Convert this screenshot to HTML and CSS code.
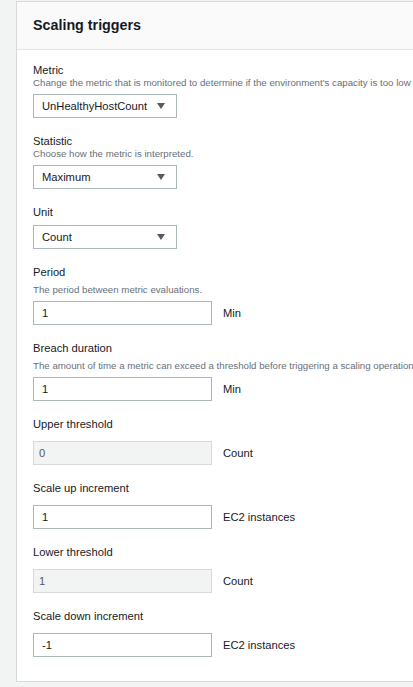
FILE: index.html
```html
<!DOCTYPE html>
<html lang="en">
<head>
<meta charset="utf-8">
<title>Scaling triggers</title>
<link rel="stylesheet" href="styles.css">
</head>
<body>
<div class="page">
  <section class="panel">
    <header class="panel-header"><h2 class="panel-title">Scaling triggers</h2></header>
    <div class="panel-body">
      <div class="field field--select">
        <div class="label">Metric</div>
        <div class="desc">Change the metric that is monitored to determine if the environment's capacity is too low or too high.</div>
        <div class="select"><span>UnHealthyHostCount</span><svg class="caret" width="8" height="6" viewBox="0 0 8 6"><path d="M0 0H8L4 6Z" fill="#545b64"/></svg></div>
      </div>
      <div class="field field--select">
        <div class="label">Statistic</div>
        <div class="desc">Choose how the metric is interpreted.</div>
        <div class="select"><span>Maximum</span><svg class="caret" width="8" height="6" viewBox="0 0 8 6"><path d="M0 0H8L4 6Z" fill="#545b64"/></svg></div>
      </div>
      <div class="field field--select">
        <div class="label">Unit</div>
        <div class="select"><span>Count</span><svg class="caret" width="8" height="6" viewBox="0 0 8 6"><path d="M0 0H8L4 6Z" fill="#545b64"/></svg></div>
      </div>
      <div class="field">
        <div class="label">Period</div>
        <div class="desc">The period between metric evaluations.</div>
        <div class="row"><input class="input" type="text" value="1"><span class="unit">Min</span></div>
      </div>
      <div class="field">
        <div class="label">Breach duration</div>
        <div class="desc">The amount of time a metric can exceed a threshold before triggering a scaling operation.</div>
        <div class="row"><input class="input" type="text" value="1"><span class="unit">Min</span></div>
      </div>
      <div class="field">
        <div class="label">Upper threshold</div>
        <div class="row"><input class="input input--disabled" type="text" value="0" disabled><span class="unit">Count</span></div>
      </div>
      <div class="field">
        <div class="label">Scale up increment</div>
        <div class="row"><input class="input" type="text" value="1"><span class="unit">EC2 instances</span></div>
      </div>
      <div class="field">
        <div class="label">Lower threshold</div>
        <div class="row"><input class="input input--disabled" type="text" value="1" disabled><span class="unit">Count</span></div>
      </div>
      <div class="field">
        <div class="label">Scale down increment</div>
        <div class="row"><input class="input" type="text" value="-1"><span class="unit">EC2 instances</span></div>
      </div>
    </div>
  </section>
</div>
</body>
</html>
```

FILE: styles.css
```css
html, body {
  margin: 0;
  padding: 0;
  overflow: hidden;
  background: #f2f3f3;
}

body {
  font-family: "Liberation Sans", Arial, sans-serif;
  color: #16191f;
  width: 413px;
  height: 687px;
}

.page {
  padding: 1px 0 0 16px;
}

.panel {
  width: 430px;
  background: #ffffff;
  border: 1px solid #d5dbdb;
  border-right: none;
}

.panel-header {
  background: #fafafa;
  border-bottom: 1px solid #e3e6e6;
  padding: 15px 16px;
}

.panel-title {
  margin: 0;
  font-size: 14.3px;
  line-height: 17px;
  font-weight: 700;
  color: #16191f;
}

.panel-body {
  padding: 13px 16px 24px;
  display: flex;
  flex-direction: column;
  gap: 16px;
}

.field {
  display: flex;
  flex-direction: column;
}

.label {
  font-size: 11.2px;
  line-height: 14px;
}

.desc {
  font-size: 9.7px;
  line-height: 12px;
  color: #687078;
  white-space: nowrap;
  margin-top: 5px;
}

.field--select .desc {
  margin-top: 0;
}

.select {
  box-sizing: border-box;
  width: 144px;
  height: 24px;
  margin-top: 6px;
  border: 1px solid #aab7b8;
  background: #ffffff;
  display: flex;
  align-items: center;
  justify-content: space-between;
  padding: 0 11px 0 8px;
  font-size: 11.2px;
}

.desc + .select {
  margin-top: 5px;
}

.row {
  display: flex;
  align-items: center;
  gap: 11px;
  margin-top: 10px;
}

.desc + .row {
  margin-top: 5px;
}

.input {
  box-sizing: border-box;
  width: 179px;
  height: 24px;
  margin: 0;
  border: 1px solid #aab7b8;
  border-radius: 0;
  background: #ffffff;
  padding: 0 8px;
  font-family: "Liberation Sans", Arial, sans-serif;
  font-size: 11.2px;
  color: #16191f;
  outline: none;
}

.input--disabled {
  background: #f2f3f3;
  border-color: #d5dbdb;
  color: #545b64;
  -webkit-text-fill-color: #545b64;
  opacity: 1;
  padding-left: 5px;
}

.unit {
  font-size: 11.2px;
  color: #16191f;
}
```
